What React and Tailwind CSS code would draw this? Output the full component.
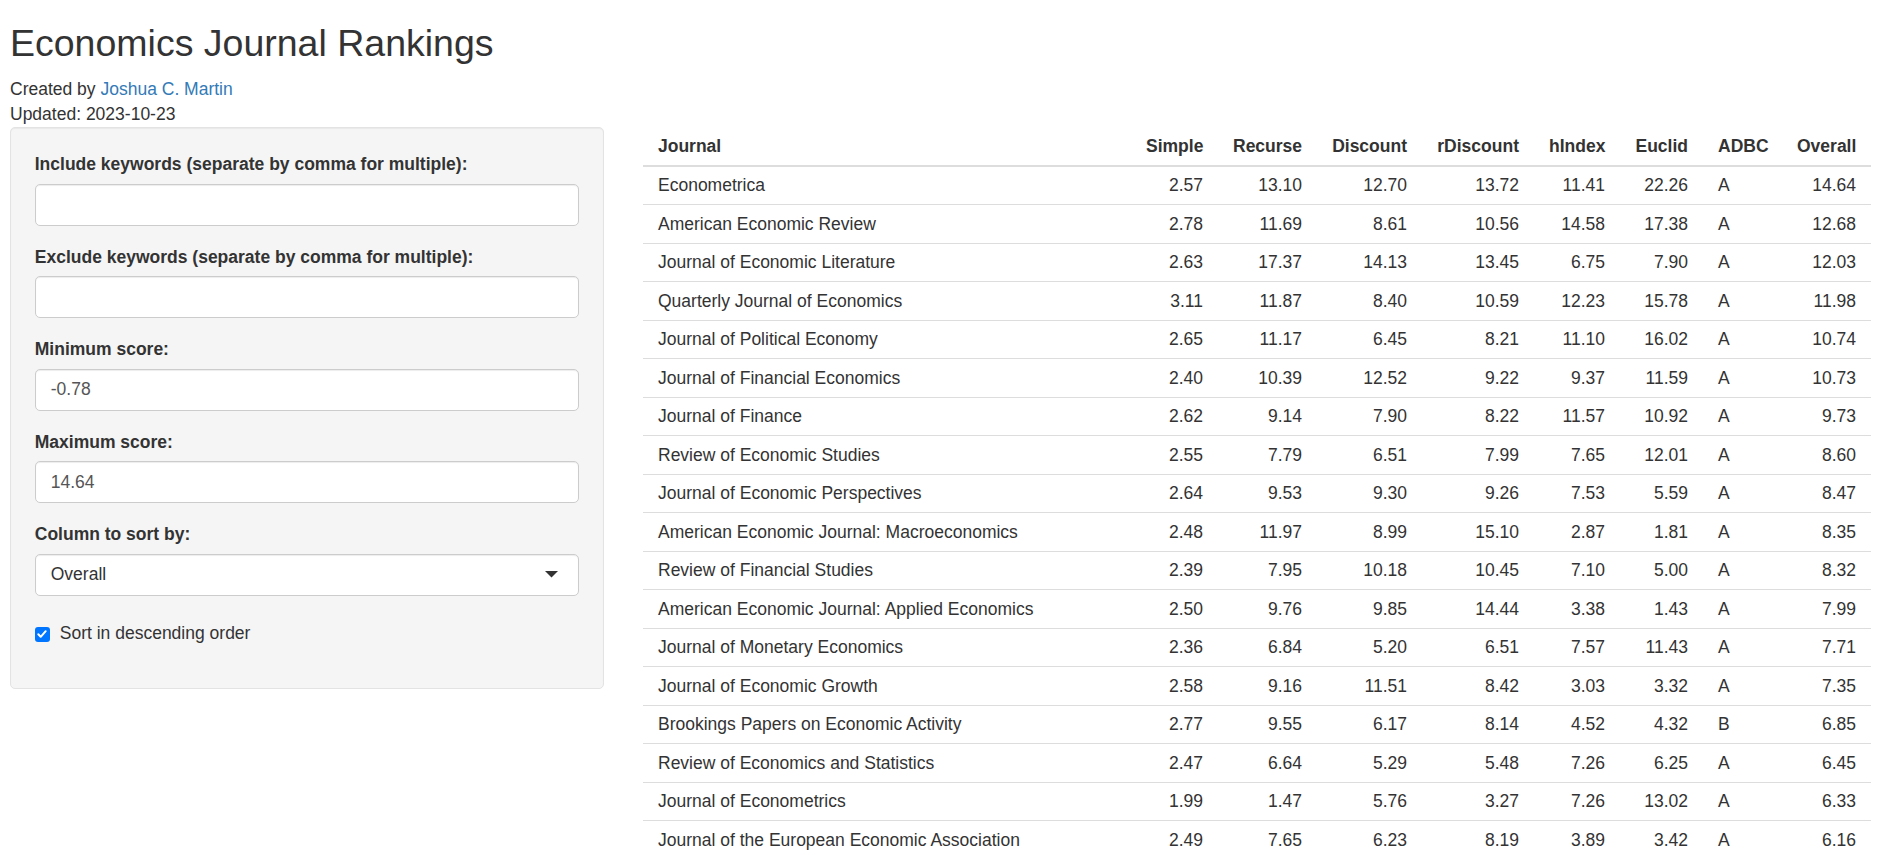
import React, { useState } from "react";

const rows = [
    ["Econometrica", "2.57", "13.10", "12.70", "13.72", "11.41", "22.26", "A", "14.64"],
    ["American Economic Review", "2.78", "11.69", "8.61", "10.56", "14.58", "17.38", "A", "12.68"],
    ["Journal of Economic Literature", "2.63", "17.37", "14.13", "13.45", "6.75", "7.90", "A", "12.03"],
    ["Quarterly Journal of Economics", "3.11", "11.87", "8.40", "10.59", "12.23", "15.78", "A", "11.98"],
    ["Journal of Political Economy", "2.65", "11.17", "6.45", "8.21", "11.10", "16.02", "A", "10.74"],
    ["Journal of Financial Economics", "2.40", "10.39", "12.52", "9.22", "9.37", "11.59", "A", "10.73"],
    ["Journal of Finance", "2.62", "9.14", "7.90", "8.22", "11.57", "10.92", "A", "9.73"],
    ["Review of Economic Studies", "2.55", "7.79", "6.51", "7.99", "7.65", "12.01", "A", "8.60"],
    ["Journal of Economic Perspectives", "2.64", "9.53", "9.30", "9.26", "7.53", "5.59", "A", "8.47"],
    ["American Economic Journal: Macroeconomics", "2.48", "11.97", "8.99", "15.10", "2.87", "1.81", "A", "8.35"],
    ["Review of Financial Studies", "2.39", "7.95", "10.18", "10.45", "7.10", "5.00", "A", "8.32"],
    ["American Economic Journal: Applied Economics", "2.50", "9.76", "9.85", "14.44", "3.38", "1.43", "A", "7.99"],
    ["Journal of Monetary Economics", "2.36", "6.84", "5.20", "6.51", "7.57", "11.43", "A", "7.71"],
    ["Journal of Economic Growth", "2.58", "9.16", "11.51", "8.42", "3.03", "3.32", "A", "7.35"],
    ["Brookings Papers on Economic Activity", "2.77", "9.55", "6.17", "8.14", "4.52", "4.32", "B", "6.85"],
    ["Review of Economics and Statistics", "2.47", "6.64", "5.29", "5.48", "7.26", "6.25", "A", "6.45"],
    ["Journal of Econometrics", "1.99", "1.47", "5.76", "3.27", "7.26", "13.02", "A", "6.33"],
    ["Journal of the European Economic Association", "2.49", "7.65", "6.23", "8.19", "3.89", "3.42", "A", "6.16"],
];

// 左寄せの列（Journal, ADBC）以外は右寄せ
const columns = [
    { name: "Journal", left: true },
    { name: "Simple" },
    { name: "Recurse" },
    { name: "Discount" },
    { name: "rDiscount" },
    { name: "hIndex" },
    { name: "Euclid" },
    { name: "ADBC", left: true },
    { name: "Overall" },
];

function TextField({ label, value }) {
    return (
        <div className="mb-[19px]">
            <label className="block font-bold leading-[25px] mb-[6.5px]">{label}</label>
            <input
                type="text"
                defaultValue={value}
                className="block w-full h-[42px] px-[15px] bg-white text-[#555] border border-[#ccc] rounded-[5px] shadow-[inset_0_1px_1px_rgba(0,0,0,0.075)] outline-none"
            />
        </div>
    );
}

export default function App() {
    const [desc, setDesc] = useState(true);

    return (
        <div className="h-screen overflow-hidden bg-white text-[#333] text-[17.5px] leading-[25px] font-['Liberation_Sans',Arial,sans-serif] pl-[10px] pr-[18px]">
            <h1 className="text-[37.5px] leading-[41.25px] font-normal mt-[23px] mb-[13px]">Economics Journal Rankings</h1>
            <div>
                Created by <a href="#" className="text-[#337ab7]">Joshua C. Martin</a>
            </div>
            <div>Updated: 2023-10-23</div>

            <div className="flex items-start gap-[39px]">
                {/* サイドバー */}
                <div className="w-[594px] shrink-0 bg-[#f5f5f5] border border-[#e3e3e3] rounded-[5px] shadow-[inset_0_1px_1px_rgba(0,0,0,0.05)] p-[23.75px]">
                    <TextField label="Include keywords (separate by comma for multiple):" value="" />
                    <TextField label="Exclude keywords (separate by comma for multiple):" value="" />
                    <TextField label="Minimum score:" value="-0.78" />
                    <TextField label="Maximum score:" value="14.64" />

                    <div className="mb-[19px]">
                        <label className="block font-bold leading-[25px] mb-[6.5px]">Column to sort by:</label>
                        <div className="flex items-center justify-between h-[42px] pl-[15px] pr-[20px] bg-white border border-[#ccc] rounded-[5px] shadow-[inset_0_1px_1px_rgba(0,0,0,0.075)]">
                            <span>Overall</span>
                            <svg width="13" height="7" viewBox="0 0 13 7">
                                <polygon points="0,0 13,0 6.5,6.5" fill="#333" />
                            </svg>
                        </div>
                    </div>

                    <label
                        className="relative block mt-[25px] mb-[19px] pl-[25px] leading-[25px] cursor-pointer select-none"
                        onClick={() => setDesc(!desc)}
                    >
                        <span
                            className={
                                "absolute left-0 top-[6px] w-[15px] h-[15px] rounded-[3px] flex items-center justify-center " +
                                (desc ? "bg-[#0075ff]" : "bg-white border border-[#767676]")
                            }
                        >
                            {desc && (
                                <svg width="12" height="12" viewBox="0 0 12 12">
                                    <path d="M2.3 6.3l2.4 2.5 5-5.6" fill="none" stroke="white" strokeWidth="2" strokeLinecap="round" strokeLinejoin="round" />
                                </svg>
                            )}
                        </span>
                        Sort in descending order
                    </label>
                </div>

                {/* ランキング表 */}
                <div className="flex-1">
                    <table className="w-full table-fixed">
                        <colgroup>
                            <col />
                            <col className="w-[87px]" />
                            <col className="w-[99px]" />
                            <col className="w-[105px]" />
                            <col className="w-[112px]" />
                            <col className="w-[86px]" />
                            <col className="w-[83px]" />
                            <col className="w-[79px]" />
                            <col className="w-[89px]" />
                        </colgroup>
                        <thead>
                            <tr>
                                {columns.map((c) => (
                                    <th
                                        key={c.name}
                                        className={
                                            "px-[15px] py-[6.25px] font-bold border-b-2 border-[#ddd] " +
                                            (c.left ? "text-left" : "text-right")
                                        }
                                    >
                                        {c.name}
                                    </th>
                                ))}
                            </tr>
                        </thead>
                        <tbody>
                            {rows.map((r) => (
                                <tr key={r[0]}>
                                    {r.map((v, i) => (
                                        <td
                                            key={i}
                                            className={
                                                "px-[15px] py-[6.25px] border-t border-[#ddd] whitespace-nowrap " +
                                                (columns[i].left ? "text-left" : "text-right")
                                            }
                                        >
                                            {v}
                                        </td>
                                    ))}
                                </tr>
                            ))}
                        </tbody>
                    </table>
                </div>
            </div>
        </div>
    );
}
